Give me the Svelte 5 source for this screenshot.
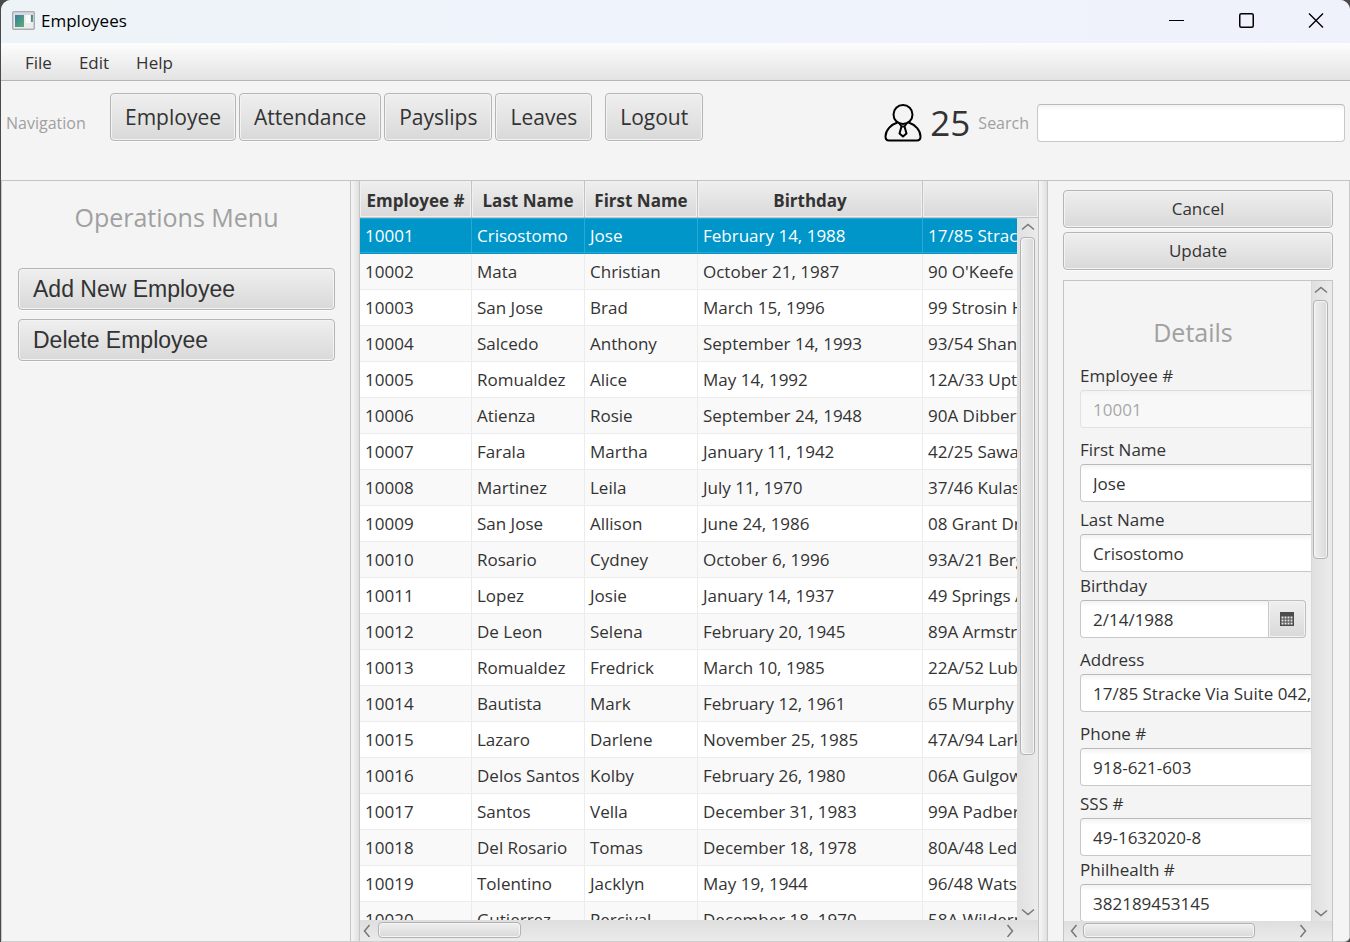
<script>
  const employees = [
    ['10001', 'Crisostomo', 'Jose', 'February 14, 1988', '17/85 Stracke'],
    ['10002', 'Mata', 'Christian', 'October 21, 1987', "90 O'Keefe"],
    ['10003', 'San Jose', 'Brad', 'March 15, 1996', '99 Strosin Hills'],
    ['10004', 'Salcedo', 'Anthony', 'September 14, 1993', '93/54 Shanahan'],
    ['10005', 'Romualdez', 'Alice', 'May 14, 1992', '12A/33 Upton'],
    ['10006', 'Atienza', 'Rosie', 'September 24, 1948', '90A Dibbert'],
    ['10007', 'Farala', 'Martha', 'January 11, 1942', '42/25 Sawayn'],
    ['10008', 'Martinez', 'Leila', 'July 11, 1970', '37/46 Kulas'],
    ['10009', 'San Jose', 'Allison', 'June 24, 1986', '08 Grant Drive'],
    ['10010', 'Rosario', 'Cydney', 'October 6, 1996', '93A/21 Berge'],
    ['10011', 'Lopez', 'Josie', 'January 14, 1937', '49 Springs Apt.'],
    ['10012', 'De Leon', 'Selena', 'February 20, 1945', '89A Armstrong'],
    ['10013', 'Romualdez', 'Fredrick', 'March 10, 1985', '22A/52 Lubowitz'],
    ['10014', 'Bautista', 'Mark', 'February 12, 1961', '65 Murphy'],
    ['10015', 'Lazaro', 'Darlene', 'November 25, 1985', '47A/94 Larkin'],
    ['10016', 'Delos Santos', 'Kolby', 'February 26, 1980', '06A Gulgowski'],
    ['10017', 'Santos', 'Vella', 'December 31, 1983', '99A Padberg'],
    ['10018', 'Del Rosario', 'Tomas', 'December 18, 1978', '80A/48 Ledner'],
    ['10019', 'Tolentino', 'Jacklyn', 'May 19, 1944', '96/48 Watsica'],
    ['10020', 'Gutierrez', 'Percival', 'December 18, 1970', '58A Wilderman']
  ];

  const fields = [
    { id: 'number', label: 'Employee #', value: '10001', disabled: true, space: 'loose' },
    { id: 'first', label: 'First Name', value: 'Jose', space: 'snug' },
    { id: 'last', label: 'Last Name', value: 'Crisostomo', space: 'tight' },
    { id: 'birthday', label: 'Birthday', value: '2/14/1988', date: true, space: 'loose' },
    { id: 'address', label: 'Address', value: '17/85 Stracke Via Suite 042, Poblacion', space: 'loose' },
    { id: 'phone', label: 'Phone #', value: '918-621-603', space: 'snug' },
    { id: 'sss', label: 'SSS #', value: '49-1632020-8', space: 'tight' },
    { id: 'philhealth', label: 'Philhealth #', value: '382189453145', space: 'tight' }
  ];

  let selected = $state('10001');
</script>

{#snippet arrow(d, label)}
  <button type="button" class="arrow" aria-label={label}>
    <svg width="14" height="14" viewBox="0 0 14 14"><path {d} fill="none" stroke="#777" stroke-width="1.5" /></svg>
  </button>
{/snippet}

<div class="window">
  <header class="titlebar">
    <svg class="app-icon" width="24" height="20" viewBox="0 0 24 20" aria-hidden="true">
      <defs>
        <linearGradient id="screen" x1="0" y1="0" x2="1" y2="1">
          <stop offset="0" stop-color="#3b79a5" /><stop offset="1" stop-color="#56b36b" />
        </linearGradient>
      </defs>
      <rect x="0.75" y="0.75" width="21.5" height="17.5" rx="1" fill="#ececee" stroke="#a9adb3" stroke-width="1.5" />
      <rect x="2" y="2" width="19" height="2" fill="#d5dae0" />
      <rect x="3" y="4" width="9" height="12" fill="url(#screen)" />
      <rect x="14" y="4" width="4" height="8" fill="#fafafa" />
      <rect x="19" y="4" width="2" height="7" fill="url(#screen)" />
    </svg>
    <span class="title">Employees</span>
    <div class="controls">
      <button aria-label="Minimize"><svg width="16" height="16" viewBox="0 0 16 16"><path d="M0 7.500h15" stroke="#000" /></svg></button>
      <button aria-label="Maximize"><svg width="16" height="16" viewBox="0 0 16 16"><rect x="0.750" y="0.750" width="13.500" height="13.500" rx="1.500" fill="none" stroke="#000" stroke-width="1.500" /></svg></button>
      <button aria-label="Close"><svg width="16" height="16" viewBox="0 0 16 16"><path d="M1 0.500l14 14M15 0.500l-14 14" stroke="#000" stroke-width="1.400" /></svg></button>
    </div>
  </header>

  <nav class="menubar">
    <button>File</button>
    <button>Edit</button>
    <button>Help</button>
  </nav>

  <div class="toolbar">
    <span class="muted nav-label">Navigation</span>
    <nav class="tabs">
      <button class="btn big">Employee</button>
      <button class="btn big">Attendance</button>
      <button class="btn big">Payslips</button>
      <button class="btn big">Leaves</button>
      <button class="btn big logout">Logout</button>
    </nav>
    <svg class="person" width="38" height="38" viewBox="0 0 38 38" fill="none" stroke="#000" stroke-width="2" stroke-linejoin="round" aria-hidden="true">
      <circle cx="19" cy="10.500" r="9.500" />
      <path d="M13.500 18.500C7 20.500 1.500 26 1.500 32.500c0 2.500 1.200 4 3.500 4h28c2.300 0 3.500-1.500 3.500-4C36.500 26 31 20.500 24.500 18.500" />
      <path d="M15.500 19.500l2 3L15.500 29.500l3.500 3 3.500-3-2-7 2-3M17.500 22.500h3" />
    </svg>
    <span class="count">25</span>
    <label class="muted" for="search">Search</label>
    <input id="search" class="box" type="text" />
  </div>

  <main class="split">
    <aside class="operations">
      <h2>Operations Menu</h2>
      <button class="btn op">Add New Employee</button>
      <button class="btn op">Delete Employee</button>
    </aside>

    <div class="divider"></div>

    <section class="records">
      <div class="table-view">
        <table>
          <colgroup><col class="c-id" /><col class="c-name" /><col class="c-name" /><col class="c-date" /><col /></colgroup>
          <thead>
            <tr><th>Employee #</th><th>Last Name</th><th>First Name</th><th>Birthday</th><th aria-label="Address"></th></tr>
          </thead>
          <tbody>
            {#each employees as row (row[0])}
              <tr class:selected={row[0] === selected} onclick={() => (selected = row[0])}>
                {#each row as cell}<td>{cell}</td>{/each}
              </tr>
            {/each}
          </tbody>
        </table>
      </div>
      <div class="vbar table-vbar">
        {@render arrow('M1 8.500l6-5 6 5', 'Scroll up')}
        <div class="track"><div class="thumb" style="height: 78%"></div></div>
        {@render arrow('M1 6.500l6 5 6-5', 'Scroll down')}
      </div>
      <div class="hbar">
        {@render arrow('M7.500 2l-5 6 5 6', 'Scroll left')}
        <div class="track"><div class="thumb" style="width: 23%"></div></div>
        {@render arrow('M6.500 2l5 6-5 6', 'Scroll right')}
      </div>
    </section>

    <div class="divider"></div>

    <aside class="editor">
      <button class="btn act">Cancel</button>
      <button class="btn act">Update</button>
      <div class="scrollpane">
        <form class="viewport" onsubmit={(e) => e.preventDefault()}>
          <h2>Details</h2>
          {#each fields as f (f.id)}
            <div class="field {f.space}">
              <label for={f.id}>{f.label}</label>
              {#if f.date}
                <div class="date">
                  <input id={f.id} class="box" type="text" value={f.value} />
                  <button type="button" aria-label="Choose date">
                    <svg width="14" height="14" viewBox="0 0 14 14">
                      <path d="M0 0h14v14H0z" fill="#4c4c4c" />
                      <path d="M1.500 5.500h11M1.500 8.500h11M1.500 11.500h11" stroke="#e4e4e4" stroke-width="2" stroke-dasharray="2 1" />
                    </svg>
                  </button>
                </div>
              {:else}
                <input id={f.id} class="box" type="text" value={f.value} disabled={f.disabled} />
              {/if}
            </div>
          {/each}
        </form>
        <div class="vbar">
          {@render arrow('M1 8.500l6-5 6 5', 'Scroll up')}
          <div class="track"><div class="thumb" style="height: 43%"></div></div>
          {@render arrow('M1 6.500l6 5 6-5', 'Scroll down')}
        </div>
        <div class="hbar">
          {@render arrow('M9.500 1l-5 6 5 6', 'Scroll left')}
          <div class="track"><div class="thumb" style="width: 82%"></div></div>
          {@render arrow('M5.500 1l5 6-5 6', 'Scroll right')}
        </div>
      </div>
    </aside>
  </main>
</div>

<style>
  :global(body) {
    margin: 0;
    background: #4a4a4a;
  }
  * {
    box-sizing: border-box;
  }
  .window {
    display: flex;
    flex-direction: column;
    height: 100vh;
    margin-left: 1px;
    overflow: hidden;
    border-bottom: 1px solid #cfcfcf;
    border-radius: 10px 10px 6px 0;
    background: #f4f4f4;
    color: #333;
    font: 17px/24px 'Open Sans', 'Noto Sans', sans-serif;
  }
  button,
  input {
    font: inherit;
    color: inherit;
  }
  button {
    margin: 0;
    padding: 0;
    border: 0;
    background: none;
    white-space: nowrap;
  }

  .titlebar {
    display: flex;
    flex: none;
    align-items: center;
    height: 43px;
    padding: 0 0 2px 11px;
    background: linear-gradient(90deg, #edf3f7, #eff3fb 40%, #eff2fb);
    color: #000;
  }
  .title {
    margin-left: 5px;
  }
  .controls {
    display: flex;
    align-self: stretch;
    margin-left: auto;
  }
  .controls button {
    display: flex;
    align-items: center;
    justify-content: center;
    width: 70px;
  }
  .controls button:last-child {
    width: 68px;
  }

  .menubar {
    display: flex;
    flex: none;
    gap: 27px;
    height: 38px;
    padding: 2px 0 0 24px;
    border-bottom: 1px solid #b5b5b5;
    background: linear-gradient(#fdfdfd, #e3e3e3);
  }

  .toolbar {
    display: flex;
    flex: none;
    align-items: center;
    height: 100px;
    padding: 0 5px 15px;
    border-bottom: 1px solid #c4c4c4;
  }
  .muted {
    color: #a0a0a0;
    font-size: 16px;
  }
  .nav-label {
    width: 104px;
  }
  .tabs {
    display: flex;
    align-self: flex-start;
    gap: 3px;
    margin-right: auto;
    padding-top: 12px;
  }
  .btn {
    border: 1px solid #b5b5b5;
    border-radius: 4px;
    background: linear-gradient(#efefef, #d9d9d9);
    box-shadow: inset 0 0 0 1px #f3f3f3, 0 1px 0 #fbfbfb;
  }
  .big {
    height: 48px;
    padding: 0 14px;
    font-size: 21px;
  }
  .logout {
    margin-left: 10px;
  }
  .count {
    margin: 0 8px;
    font-size: 35px;
  }
  .box {
    height: 38px;
    padding: 0 12px;
    border: 1px solid #c8c8c8;
    border-top-color: #b9b9b9;
    border-radius: 4px;
    background: linear-gradient(#f3f3f3, #fff 6px);
  }
  #search {
    width: 23%;
    margin-left: 8px;
  }

  .split {
    display: grid;
    flex: 1;
    grid-template: minmax(0, 1fr) / minmax(0, 349fr) 10px minmax(0, 678fr) 10px minmax(0, 302fr);
    min-height: 0;
  }
  .divider {
    border: solid #c4c4c4;
    border-width: 0 1px;
    background: linear-gradient(90deg, #f6f6f6, #e0e0e0);
  }
  h2 {
    margin: 0;
    color: #a0a0a0;
    font-size: 25px;
    font-weight: 400;
    line-height: 36px;
    text-align: center;
  }

  .operations {
    display: flex;
    flex-direction: column;
    gap: 9px;
    padding: 18px 15px 18px 16px;
    border-left: 1px solid #c8c8c8;
  }
  .operations h2 {
    margin-bottom: 24px;
  }
  .op {
    height: 42px;
    padding: 0 14px;
    font-family: 'Liberation Sans', Arial, sans-serif;
    font-size: 23px;
    text-align: left;
  }

  .records {
    display: grid;
    grid-template: 37px minmax(0, 1fr) 21px / minmax(0, 1fr) 21px;
    min-height: 0;
  }
  .table-view {
    grid-area: 1 / 1 / 3 / 3;
    overflow: hidden;
    background: #fff;
  }
  table {
    width: 100%;
    border-collapse: separate;
    border-spacing: 0;
    table-layout: fixed;
  }
  .c-id {
    width: 112px;
  }
  .c-name {
    width: 113px;
  }
  .c-date {
    width: 225px;
  }
  th,
  td {
    overflow: hidden;
    border-right: 1px solid #ececec;
    border-bottom: 1px solid #ececec;
    white-space: nowrap;
  }
  th {
    height: 37px;
    padding: 3px 0 0;
    border-color: #c4c4c4;
    background: linear-gradient(#efefef, #d9d9d9);
    box-shadow: inset 0 0 0 1px #f0f0f0;
    font-size: 17px;
    font-weight: 700;
  }
  td {
    height: 36px;
    padding: 0 0 0 5px;
  }
  th:last-child,
  td:last-child {
    border-right: 0;
  }
  tbody tr:nth-child(even) {
    background: #f9f9f9;
  }
  tbody tr.selected {
    background: #0096c9;
    color: #fff;
  }
  .selected td {
    border-color: #2aa7d2;
    border-bottom-color: #0096c9;
    box-shadow: inset 0 2px 0 -1px #2aa7d2, inset 0 -1px 0 #2aa7d2;
  }

  .vbar,
  .hbar {
    display: flex;
    background: linear-gradient(90deg, #e0e0e0, #ebebeb);
  }
  .vbar {
    flex-direction: column;
    padding: 1px 3px;
  }
  .hbar {
    grid-column: 1 / -1;
    padding: 2px 21px 3px 0;
    background: linear-gradient(#dedede, #ebebeb);
  }
  .table-vbar {
    grid-area: 2 / 2;
  }
  .arrow {
    display: flex;
    flex: 0 0 18px;
    align-items: center;
    justify-content: center;
  }
  .track {
    flex: 1;
    min-height: 0;
  }
  .thumb {
    border: 1px solid #b2b2b2;
    border-radius: 4px;
    box-shadow: inset 0 0 0 1px #f5f5f5;
  }
  .vbar .thumb {
    background: linear-gradient(90deg, #efefef, #d9d9d9);
  }
  .hbar .thumb {
    height: 100%;
    background: linear-gradient(#efefef, #d9d9d9);
  }

  .editor {
    display: flex;
    flex-direction: column;
    gap: 4px;
    min-height: 0;
    padding: 9px 16px 0 15px;
    border-right: 1px solid #c8c8c8;
  }
  .act {
    flex: none;
    height: 38px;
  }
  .scrollpane {
    display: grid;
    flex: 1;
    grid-template: minmax(0, 1fr) 20px / minmax(0, 1fr) 21px;
    min-height: 0;
    margin-top: 6px;
    border: solid #c4c4c4;
    border-width: 1px 1px 0;
  }
  .scrollpane .vbar {
    padding: 1px 4px 1px 1px;
    border-left: 1px solid #d8d8d8;
  }
  .scrollpane .hbar {
    padding-left: 1px;
  }
  .viewport {
    overflow: hidden;
    padding: 33px 5px 0 16px;
  }
  .viewport h2 {
    margin-bottom: 12px;
  }
  .field {
    display: flex;
    flex-direction: column;
    gap: 1px;
  }
  .field label {
    line-height: 27px;
  }
  .loose {
    margin-bottom: 8px;
  }
  .snug {
    margin-bottom: 4px;
  }
  .field > .box {
    width: calc(100% + 24px);
  }
  .box:disabled {
    opacity: 0.4;
  }
  .date {
    display: flex;
  }
  .date .box {
    flex: 1;
    min-width: 0;
    border-radius: 4px 0 0 4px;
  }
  .date button {
    display: flex;
    flex: 0 0 37px;
    align-items: center;
    justify-content: center;
    border: 1px solid #bfbfbf;
    border-left: 0;
    border-radius: 0 4px 4px 0;
    background: linear-gradient(#efefef, #d9d9d9);
    box-shadow: inset 0 0 0 1px #f3f3f3;
  }
</style>
